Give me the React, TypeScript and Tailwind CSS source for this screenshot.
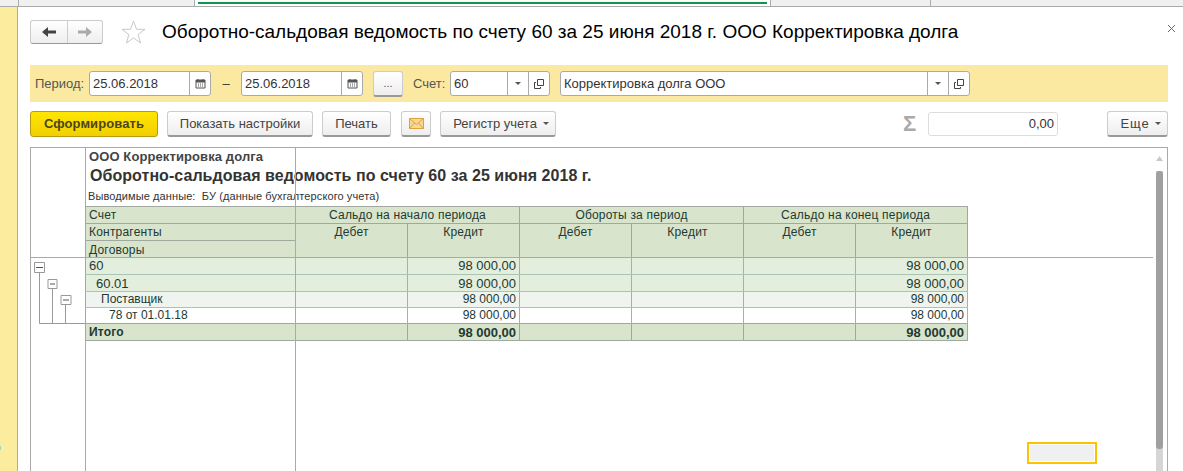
const Cal = () => (
  <svg width="11" height="11" viewBox="0 0 11 11" className="text-[#555]">
    <path d="M1 2h9v8H1z" fill="#fff" stroke="currentColor" />
    <path d="M1 2h9v2.500H1z" fill="currentColor" />
    <path d="M3 1v2M8 1v2" stroke="currentColor" />
    <path d="M3 6h1M5 6h1M7 6h1M3 8h1M5 8h1M7 8h1" stroke="currentColor" />
  </svg>
);
const Tri = () => (
  <svg width="6" height="3" viewBox="0 0 6 3"><path d="M0 0h6L3 3z" fill="#555" /></svg>
);
const Open = () => (
  <svg width="10" height="10" viewBox="0 0 10 10" fill="none" stroke="#444">
    <path d="M3.500 .5h6v6h-6z" />
    <path d="M2 3.500H.5v6h6V8" />
  </svg>
);
const Seg = ({ w, children }: { w: string; children: React.ReactNode }) => (
  <div className={`${w} h-full border-l border-[#aaa] flex items-center justify-center`}>{children}</div>
);
const Btn = ({ w, children, ml, extra = "" }: { w: string; ml: string; extra?: string; children: React.ReactNode }) => (
  <button className={`${w} ${ml} ${extra} h-[26px] rounded-[3px] border border-[#ccc] border-b-[#999] border-b-2 bg-gradient-to-b from-white to-[#eeeeee] text-[#444] text-[13px] flex items-center justify-center gap-[6px]`}>
    {children}
  </button>
);
const T = "border border-[#a0a8a0] bg-[#d8e4cb] text-center align-top font-normal leading-[15px] p-0 pt-[1px] text-[12px] tracking-[0.2px]";
const Row = ({ label, pad, bg, v, line, size, al }: { label: string; pad: string; bg: string; v: string; line: string; size: string; al: string }) => {
  const c = `border-r border-r-[#a0b4a8] border-b ${line} text-right pr-[3px] p-0 leading-[15px] ${al}`;
  return (
    <tr className={`${bg} ${v} ${size}`}>
      <td className={`border-l border-l-[#a0a8a0] border-b ${line} p-0 leading-[15px] ${pad} ${al}`}>{label}</td>
      <td className={`border-l border-l-[#a0a8a0] ${c}`}></td>
      <td className={c}>98 000,00</td>
      <td className={c}></td>
      <td className={c}></td>
      <td className={c}></td>
      <td className={c}>98 000,00</td>
    </tr>
  );
};
export default function App() {
  return (
    <div className="w-[1183px] h-[471px] overflow-hidden flex bg-white text-[13px] text-[#333]" style={{ fontFamily: '"Liberation Sans", Arial, sans-serif' }}>
      <div className="w-[18px] relative bg-[#fcec9e] border-r border-[#c9b32f] shrink-0 mt-[7px]">
        <div className="absolute left-0 top-[439px] w-[1px] h-[4px] bg-[#8ee0c0]" />
      </div>
      <div className="flex-1 min-w-0 flex flex-col">
        <div className="h-[7px] -ml-[18px] shrink-0 flex bg-[#f0f0f0] border-b border-[#aaa]">
          <div className="w-[19px] border-r border-[#aaa]" />
          <div className="w-[176px] border-r border-[#aaa]" />
          <div className="w-[576px] bg-white border-r border-[#aaa] pl-[3px] pr-[3px]">
            <div className="h-[2px] mt-[2px] bg-[#0f9650]" />
          </div>
          <div className="w-[160px] border-r border-[#aaa]" />
        </div>
        <div className="pl-[12px] pr-[15px] flex-1 flex flex-col min-h-0">
          <div className="h-[58px] pb-[9px] shrink-0 flex items-center relative">
            <div className="w-[73px] h-[24px] flex rounded-[3px] border border-[#ccc] border-b-[#999] bg-gradient-to-b from-white to-[#eeeeee]">
              <div className="w-[37px] flex items-center justify-center border-r border-[#ccc]">
                <svg width="14" height="10" viewBox="0 0 14 10"><path d="M0 5l6-5v3.500h8v3H6v3.500z" fill="#444" /></svg>
              </div>
              <div className="flex-1 flex items-center justify-center">
                <svg width="14" height="10" viewBox="0 0 14 10"><path d="M14 5L8 0v3.500H0v3h8v3.500z" fill="#aaa" /></svg>
              </div>
            </div>
            <svg className="ml-[18px]" width="25" height="24" viewBox="0 0 25 24"><path d="M12.500 1l3 8.300h8.500l-6.900 5.300 2.500 8.400-7.100-5.100-7.100 5.100 2.500-8.400L1 9.300h8.500z" fill="#fff" stroke="#c8c8c8" /></svg>
            <div className="ml-[16px] mt-[2px] text-[19px] text-black whitespace-nowrap">Оборотно-сальдовая ведомость по счету 60 за 25 июня 2018 г. ООО Корректировка долга</div>
            <svg className="absolute right-[-8px] top-[17px]" width="9" height="9" viewBox="0 0 9 9"><path d="M1 1l7 7M8 1l-7 7" stroke="#666" /></svg>
          </div>
          <div className="h-[37px] shrink-0 bg-[#fbe9a1] flex items-center pl-[5px]">
            <span className="text-[#555] w-[54px] shrink-0">Период:</span>
            <div className="w-[122px] h-[25px] bg-white border border-[#aaa] rounded-[3px] flex items-center">
              <span className="flex-1 pl-[3px]">25.06.2018</span>
              <Seg w="w-[21px]"><Cal /></Seg>
            </div>
            <span className="w-[30px] text-center">–</span>
            <div className="w-[122px] h-[25px] bg-white border border-[#aaa] rounded-[3px] flex items-center">
              <span className="flex-1 pl-[3px]">25.06.2018</span>
              <Seg w="w-[21px]"><Cal /></Seg>
            </div>
            <button className="ml-[10px] w-[30px] h-[26px] rounded-[3px] border border-[#ccc] border-b-[#999] border-b-2 bg-gradient-to-b from-white to-[#eeeeee] text-[#555] text-[11px]">...</button>
            <span className="text-[#555] ml-[10px] w-[37px] shrink-0">Счет:</span>
            <div className="w-[100px] h-[25px] bg-white border border-[#aaa] rounded-[3px] flex items-center">
              <span className="flex-1 pl-[3px]">60</span>
              <Seg w="w-[21px]"><Tri /></Seg>
              <Seg w="w-[21px]"><Open /></Seg>
            </div>
            <div className="ml-[10px] w-[410px] h-[25px] bg-white border border-[#aaa] rounded-[3px] flex items-center">
              <span className="flex-1 pl-[3px]">Корректировка долга ООО</span>
              <Seg w="w-[21px]"><Tri /></Seg>
              <Seg w="w-[21px]"><Open /></Seg>
            </div>
          </div>
          <div className="h-[26px] mt-[9px] shrink-0 flex items-center">
            <button className="w-[128px] h-[26px] rounded-[3px] border border-[#b59a12] bg-gradient-to-b from-[#ffe600] to-[#f2cf00] text-[#4c4618] font-bold text-[13px] tracking-[0.1px]">Сформировать</button>
            <Btn w="w-[146px]" ml="ml-[9px]">Показать настройки</Btn>
            <Btn w="w-[69px]" ml="ml-[9px]">Печать</Btn>
            <Btn w="w-[30px]" ml="ml-[10px]">
              <svg width="15" height="11" viewBox="0 0 15 11"><path d="M.5.5h14v10H.5z" fill="#f6d890" stroke="#dfa040" /><path d="M.5.5l7 6 7-6M.5 10.500l5-5.500M14.500 10.500l-5-5.500" fill="none" stroke="#dfa040" /></svg>
            </Btn>
            <Btn w="w-[116px]" ml="ml-[9px]" extra="pl-[6px]">Регистр учета <Tri /></Btn>
            <div className="ml-[347px] text-[#aaa] font-bold text-[22px] w-[25px] leading-none">Σ</div>
            <div className="w-[130px] h-[24px] border border-[#ddd] rounded-[3px] text-right pr-[3px] leading-[22px]">0,00</div>
            <Btn w="w-[61px]" ml="ml-[49px]" extra="pl-[7px] tracking-[0.8px]">Еще <Tri /></Btn>
          </div>
          <div className="mt-[10px] flex-1 min-h-0 relative flex border-t border-l border-r border-[#aaa]">
            <div className="w-[55px] shrink-0 border-r border-[#aaa]">
              <svg className="mt-[110px]" width="54" height="70" viewBox="0 0 54 70" fill="none" stroke="#999">
                <path d="M8.500 14v51.500h46M21.500 31v34M34.500 47v18" />
                <path d="M3.500 4.500h10v10h-10zM17 21.500h9v9h-9zM30 37.500h10v9H30z" fill="#fff" />
                <path d="M5 9.500h7M19 26h5M32 42h6" stroke="#555" />
              </svg>
            </div>
            <div className="flex-1 min-w-0">
              <div className="h-[58px] pl-[3px] pt-[1px] whitespace-pre">
                <div className="font-bold text-[13px] leading-[16px] text-[#444] tracking-[0.1px]">ООО Корректировка долга</div>
                <div className="font-bold text-[16px] leading-[20px] pl-[1px] mt-[1px] tracking-[0.05px]">Оборотно-сальдовая ведомость по счету 60 за 25 июня 2018 г.</div>
                <div className="text-[11px] leading-[14px] mt-[3px] -ml-[1px] tracking-[0.1px]">Выводимые данные:  БУ (данные бухгалтерского учета)</div>
              </div>
              <table className="table-fixed border-collapse w-[882px] -ml-[1px] text-[#1d3a34]">
                <colgroup>
                  <col className="w-[210px]" />
                  <col className="w-[112px]" />
                  <col className="w-[112px]" />
                  <col className="w-[112px]" />
                  <col className="w-[112px]" />
                  <col className="w-[112px]" />
                  <col className="w-[112px]" />
                </colgroup>
                <tbody>
                  <tr className="h-[17px]">
                    <td className={`${T} text-left pl-[3px]`}>Счет</td>
                    <td colSpan={2} className={T}>Сальдо на начало периода</td>
                    <td colSpan={2} className={T}>Обороты за период</td>
                    <td colSpan={2} className={T}>Сальдо на конец периода</td>
                  </tr>
                  <tr className="h-[17px]">
                    <td className={`${T} text-left pl-[3px]`}>Контрагенты</td>
                    {[0, 1, 2, 3, 4, 5].map((i) => (
                      <td key={i} rowSpan={2} className={T}>{i % 2 ? "Кредит" : "Дебет"}</td>
                    ))}
                  </tr>
                  <tr className="h-[17px]">
                    <td className={`${T} text-left pl-[3px] !pt-[2px] !leading-[14px]`}>Договоры</td>
                  </tr>
                  <Row label="60" pad="pl-[3px]" bg="bg-[#e3eedd]" v="h-[17px]" line="border-b-[#a9c4b4]" size="text-[13px]" al="align-top" />
                  <Row label="60.01" pad="pl-[10px]" bg="bg-[#e3eedd]" v="h-[17px]" line="border-b-[#a9c4b4]" size="text-[13px]" al="align-middle" />
                  <Row label="Поставщик" pad="pl-[15px]" bg="bg-[#eff5ee]" v="h-[16px]" line="border-b-[#a9c4b4]" size="text-[12px]" al="align-bottom" />
                  <Row label="78 от 01.01.18" pad="pl-[23px]" bg="bg-white" v="h-[16px]" line="border-b-[#a0a8a0]" size="text-[12px]" al="align-middle" />
                  <tr className="h-[17px] bg-[#d8e4cb] font-bold text-[13px]">
                    <td className="border border-[#a0a8a0] pl-[3px] p-0 leading-[15px] text-[12px] tracking-[0.2px]">Итого</td>
                    <td className="border border-[#a0a8a0] p-0"></td>
                    <td className="border border-[#a0a8a0] p-0 text-right pr-[3px] leading-[15px]">98 000,00</td>
                    <td className="border border-[#a0a8a0] p-0"></td>
                    <td className="border border-[#a0a8a0] p-0"></td>
                    <td className="border border-[#a0a8a0] p-0"></td>
                    <td className="border border-[#a0a8a0] p-0 text-right pr-[3px] leading-[15px]">98 000,00</td>
                  </tr>
                </tbody>
              </table>
            </div>
            <div className="w-[7px] mr-[4px] shrink-0 relative flex flex-col items-center">
              <svg className="mt-[8px]" width="7" height="5" viewBox="0 0 7 5"><path d="M0 5h7L3.500 0z" fill="#c8c8c8" /></svg>
              <div className="mt-[10px] w-full flex-1 bg-[#d6d6d6]">
                <div className="h-[278px] bg-[#a0a0a0] rounded-[3px]" />
              </div>
            </div>
            <div className="absolute left-[264px] top-0 bottom-0 w-[1px] bg-[#aaa]" />
            <div className="absolute left-0 top-[109px] w-[1122px] h-[1px] bg-[#aaa]" />
            <div className="absolute left-[996px] top-[294px] w-[70px] h-[22px] border-2 border-[#fcc400] bg-[#f0f0f0] outline outline-1 -outline-offset-3 outline-white" />
          </div>
        </div>
      </div>
    </div>
  );
}
